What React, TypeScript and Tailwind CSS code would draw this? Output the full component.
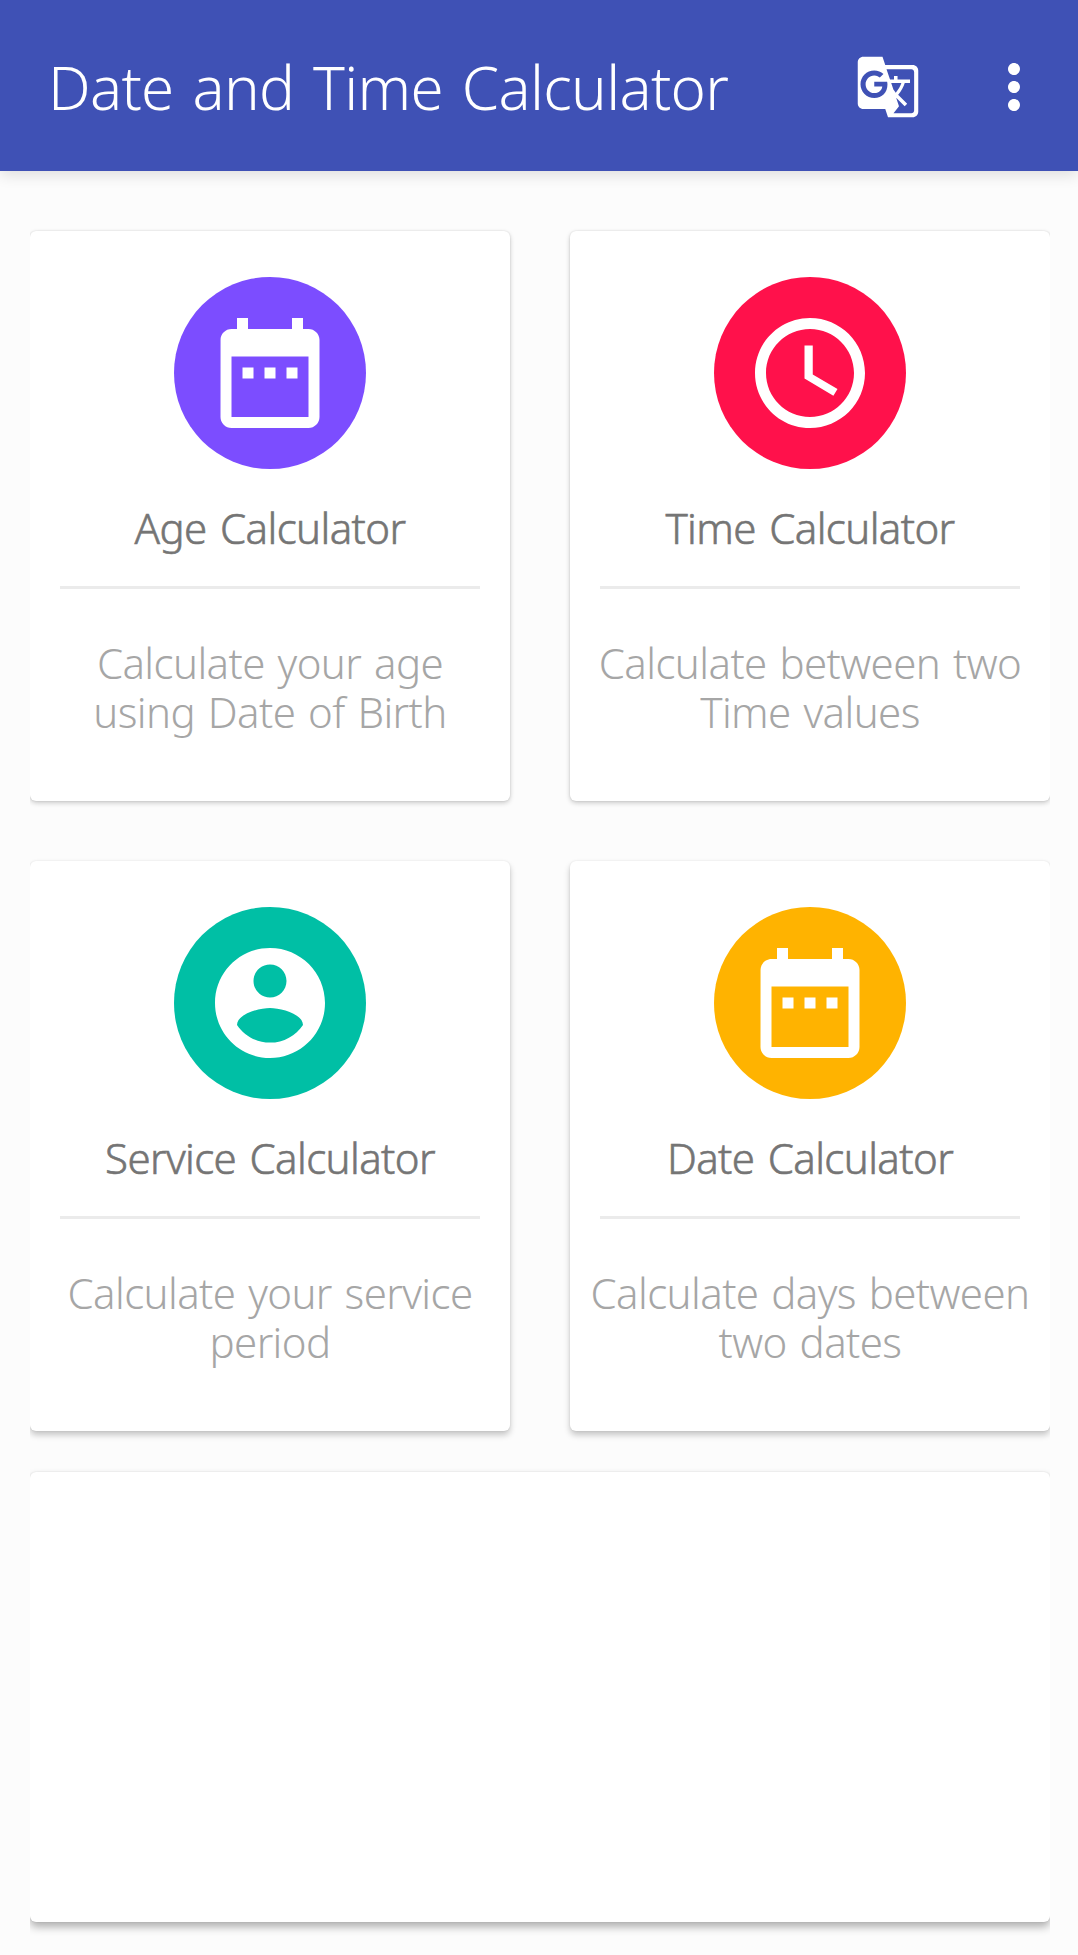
import React from "react";
import { MdDateRange, MdGTranslate, MdMoreVert, MdSchedule } from "react-icons/md";
import { clsx } from "clsx";

interface Calculator {
  title: string;
  lines: string[];
  icon: React.ComponentType<{ className?: string }>;
  color: string;
  shadow: string;
}

// Older material account circle, with the rounded shoulders
const AccountCircle: React.FC<{ className?: string }> = ({ className }) => (
  <svg viewBox="0 0 24 24" fill="currentColor" className={className}>
    <path d="M12 2C6.48 2 2 6.48 2 12s4.48 10 10 10 10-4.48 10-10S17.52 2 12 2zm0 3c1.66 0 3 1.34 3 3s-1.34 3-3 3-3-1.34-3-3 1.34-3 3-3zm0 14.2c-2.5 0-4.71-1.28-6-3.22.03-1.99 4-3.08 6-3.08 1.99 0 5.97 1.09 6 3.08-1.29 1.94-3.5 3.22-6 3.22z" />
  </svg>
);

// Shadows get a little deeper further down the screen
const calculators: Calculator[] = [
  {
    title: "Age Calculator",
    lines: ["Calculate your age", "using Date of Birth"],
    icon: MdDateRange,
    color: "bg-[#7c4dff]",
    shadow: "shadow-[0_2px_5px_rgba(0,0,0,0.2),0_0_2px_rgba(0,0,0,0.12)]"
  },
  {
    title: "Time Calculator",
    lines: ["Calculate between two", "Time values"],
    icon: MdSchedule,
    color: "bg-[#ff114b]",
    shadow: "shadow-[0_2px_5px_rgba(0,0,0,0.2),0_0_2px_rgba(0,0,0,0.12)]"
  },
  {
    title: "Service Calculator",
    lines: ["Calculate your service", "period"],
    icon: AccountCircle,
    color: "bg-[#00bfa5]",
    shadow: "shadow-[0_4px_6px_rgba(0,0,0,0.22),0_0_2px_rgba(0,0,0,0.1)]"
  },
  {
    title: "Date Calculator",
    lines: ["Calculate days between", "two dates"],
    icon: MdDateRange,
    color: "bg-[#ffb300]",
    shadow: "shadow-[0_4px_6px_rgba(0,0,0,0.22),0_0_2px_rgba(0,0,0,0.1)]"
  }
];

const CalculatorCard: React.FC<{ item: Calculator }> = ({ item }) => {
  const Icon = item.icon;

  return (
    <button className={clsx("flex h-[570px] flex-col items-center rounded-md bg-white px-[30px] pt-[46px]", item.shadow)}>
      <div className={clsx("flex size-48 shrink-0 items-center justify-center rounded-full text-white", item.color)}>
        <Icon className="size-[132px]" />
      </div>
      <h2 className="mt-[31px] whitespace-nowrap text-[42px] leading-[56px] font-light tracking-[-0.6px] text-[#757575] [word-spacing:3px] [-webkit-text-stroke:0.6px_#757575]">
        {item.title}
      </h2>
      <div className="mt-[30px] h-[3px] w-full shrink-0 bg-[#ebebeb]" />
      <p className="mt-[49px] text-center whitespace-nowrap text-[42px] leading-[49px] font-light tracking-[-0.6px] text-[#a6a6a6] [word-spacing:2.5px]">
        {item.lines.map((line) => (
          <span key={line} className="block">
            {line}
          </span>
        ))}
      </p>
    </button>
  );
};

export default function App() {
  return (
    <div className="flex h-[1955px] w-[1078px] flex-col overflow-hidden bg-[#fcfcfc] font-['Noto_Sans',sans-serif]">
      <header className="flex h-[171px] shrink-0 items-center bg-[#3f51b5] pr-7 pl-12 text-white shadow-[0_4px_14px_rgba(0,0,0,0.12)]">
        <h1 className="mt-[3px] flex-1 whitespace-nowrap text-[60px] leading-[168px] font-light tracking-[-0.7px] [word-spacing:4px]">
          Date and Time Calculator
        </h1>
        <button className="mt-[3px]">
          <MdGTranslate className="size-[66px]" />
        </button>
        <button className="mt-[3px] ml-[57px]">
          <MdMoreVert className="size-[72px]" />
        </button>
      </header>

      <main className="mt-[60px] mr-7 ml-[30px] overflow-x-clip">
        <div className="grid grid-cols-2 gap-[60px]">
          {calculators.map((item) => (
            <CalculatorCard key={item.title} item={item} />
          ))}
        </div>
        <div className="mt-[41px] h-[450px] rounded-md bg-white shadow-[0_5px_8px_rgba(0,0,0,0.3),0_0_2px_rgba(0,0,0,0.12)]" />
      </main>
    </div>
  );
}
